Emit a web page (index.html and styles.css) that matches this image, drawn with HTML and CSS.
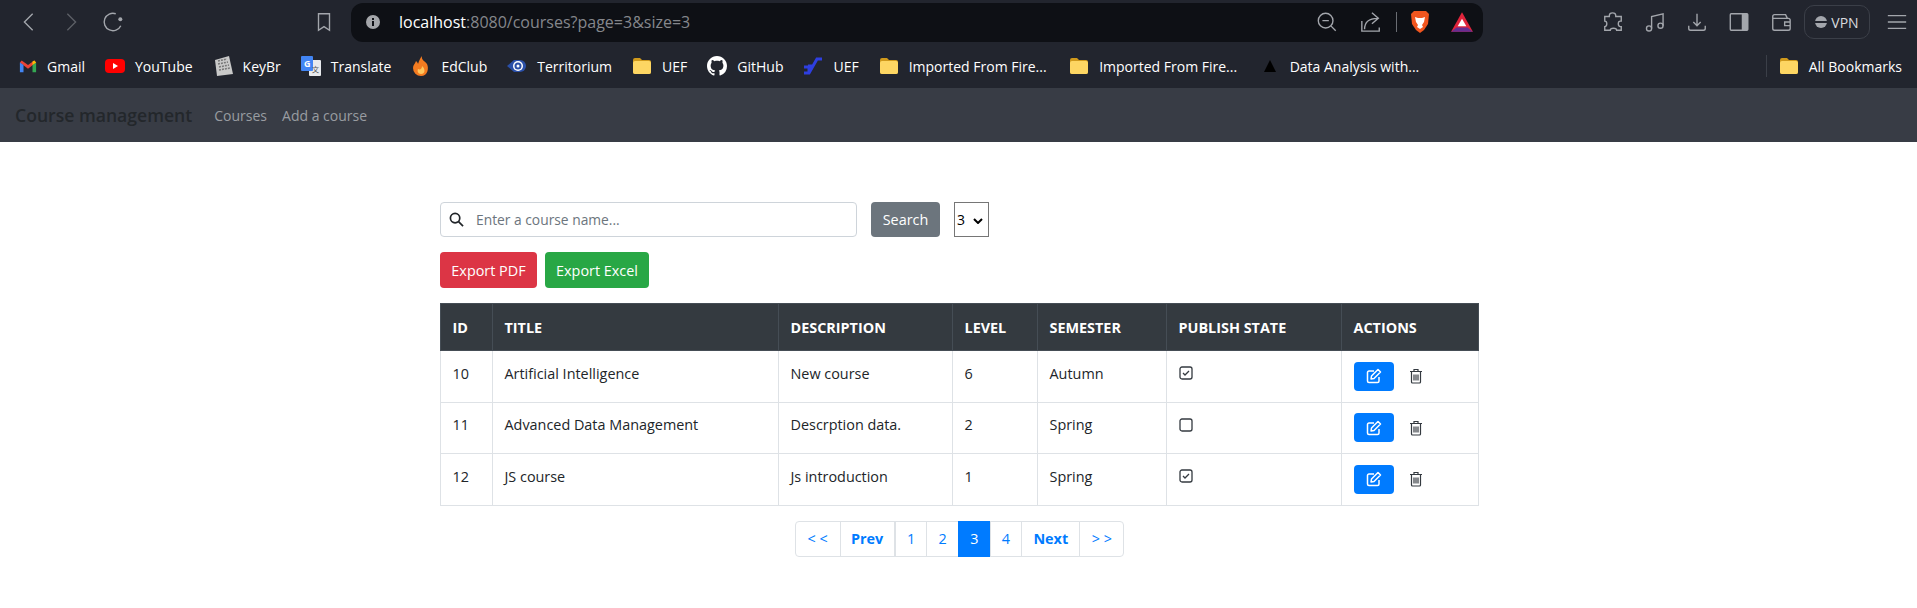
FILE: index.html
```html
<!DOCTYPE html>
<html lang="en">

<head>
  <meta charset="UTF-8">
  <title>Course management</title>
  <link rel="stylesheet" href="styles.css">
</head>

<body>
  <div class="toolbar">
    <div class="nav-icons">
      <svg class="tb-icon" viewBox="0 0 24 24"><path d="M16 3l-9 9 9 9" /></svg>
      <svg class="tb-icon dim" viewBox="0 0 24 24"><path d="M8 3l9 9-9 9" /></svg>
      <svg class="tb-icon" viewBox="0 0 24 24"><path d="M20.500 16A9.500 9.500 0 1 1 15 3" /><circle class="fill" cx="20" cy="9" r="2.200" /></svg>
    </div>
    <svg class="tb-icon bookmark-icon" viewBox="0 0 24 24"><path d="M6 3h12v18l-6-4-6 4z" /></svg>
    <div class="address">
      <svg class="info-icon" viewBox="0 0 16 16"><circle cx="8" cy="8" r="7" fill="#a4a6aa" /><rect x="7" y="7" width="2" height="5" fill="#0e1015" /><rect x="7" y="4" width="2" height="2" fill="#0e1015" /></svg>
      <span class="url"><span class="host">localhost</span>:8080/courses?page=3&amp;size=3</span>
      <svg class="tb-icon addr-icon" viewBox="0 0 24 24"><circle cx="10.500" cy="10.500" r="8" /><path d="M7 10.500h7M16.500 16.500l5 5" /></svg>
      <svg class="tb-icon addr-icon share-icon" viewBox="0 0 24 24"><path d="M2 11v11h19v-4M5 20c0-8 4-12 14-12M13 2l7 6-7 6" /></svg>
      <span class="addr-sep"></span>
      <svg class="brave-icon" viewBox="0 0 20 24"><path d="M4 1h12l3 3-1 10-4 6-4 3-4-3-4-6L1 4z" fill="#f1561f" /><path d="M5 7l3 1h4l3-1-1 5-2 3 1 2-3 2-3-2 1-2-2-3z" fill="#fff" /></svg>
      <svg class="bat-icon" viewBox="0 0 22 20"><path d="M11 1L21 19H1z" fill="#e0243b" /><path d="M1 19l5-4h10l5 4z" fill="#662d91" /><path d="M11 7l4 7H7z" fill="#fff" /></svg>
    </div>
    <div class="tools">
      <svg class="tb-icon tool" viewBox="0 0 24 24"><path d="M8 5c0-4 7-4 7 0v1h6v5h-1c-3 0-3 6 0 6h1v4h-5c0-3-7-3-7 0H3v-4c3 0 3-6 0-6V6h5z" /></svg>
      <svg class="tb-icon tool" viewBox="0 0 24 24"><circle cx="5.500" cy="19" r="2.800" /><circle cx="18" cy="16" r="2.800" /><path d="M8.300 19V6L20.800 3v13" /></svg>
      <svg class="tb-icon tool" viewBox="0 0 24 24"><path d="M12 3v13M8 12l4 4 4-4M3 16v3a2 2 0 0 0 2 2h14a2 2 0 0 0 2-2v-3" /></svg>
      <svg class="tb-icon tool" viewBox="0 0 24 24"><rect x="2.500" y="3" width="19" height="18" rx="1" /><rect class="fill" x="15" y="3" width="7" height="18" /></svg>
      <svg class="tb-icon tool" viewBox="0 0 24 24"><path d="M3 8V6a2 2 0 0 1 2-2h12l2 4M3 8v11a2 2 0 0 0 2 2h15a2 2 0 0 0 2-2V10a2 2 0 0 0-2-2zM22 12h-6v4h6" /></svg>
      <div class="vpn"><span class="vpn-dot"></span>VPN</div>
      <svg class="tb-icon menu-icon" viewBox="0 0 24 24"><path d="M2 5h20M2 12h20M2 19h20" /></svg>
    </div>
  </div>

  <div class="bookmarks">
    <a class="bm" href="#">
      <svg class="fav fav-gmail" viewBox="0 0 20 16"><path d="M1 4l9 7 9-7-2-2-7 5-7-5z" fill="#ea4335" /><path d="M1 4v11h4V7z" fill="#4285f4" /><path d="M19 4v11h-4V7z" fill="#34a853" /><path d="M15 7V3l2-1 2 2z" fill="#fbbc04" /></svg>
      Gmail
    </a>
    <a class="bm" href="#">
      <svg class="fav" viewBox="0 0 20 16"><rect y="1" width="20" height="14" rx="4" fill="#f00" /><path d="M8 5l5 3-5 3z" fill="#fff" /></svg>
      YouTube
    </a>
    <a class="bm" href="#">
      <svg class="fav" viewBox="0 0 20 20"><path d="M2 4l14-4 4 18-16 2z" fill="#c9c9c9" /><path d="M5 5l9-2M5 8l10-2M6 11l10-2M6 14l11-2" stroke="#777" stroke-width="1.500" stroke-dasharray="2 1" /></svg>
      KeyBr
    </a>
    <a class="bm" href="#">
      <svg class="fav" viewBox="0 0 20 20"><rect x="8" y="4" width="12" height="16" rx="1" fill="#e8eaed" /><rect width="12" height="15" rx="1" fill="#4285f4" /><text class="fav-g" x="3" y="11">G</text><text class="fav-t" x="11" y="16">文</text></svg>
      Translate
    </a>
    <a class="bm" href="#">
      <svg class="fav" viewBox="0 0 20 20"><path d="M10 20a8 8 0 0 1-8-8c0-3 2-4 3-7 1 1 2 2 2 3 1-3 2-6 4-8-1 4 3 5 5 8 2 4 1 12-6 12z" fill="#f47b20" /><path d="M10 18c-3 0-4-3-3-5 2 1 4 0 4-3 3 2 4 8-1 8z" fill="#ffc65c" /></svg>
      EdClub
    </a>
    <a class="bm" href="#">
      <svg class="fav" viewBox="0 0 20 16"><path d="M0 8l7-6h6a6 6 0 0 1 0 12H7z" fill="#2a4fa8" /><circle cx="11" cy="8" r="5" fill="#fff" /><circle cx="11" cy="8" r="3.500" fill="#2a4fa8" /><circle cx="11" cy="8" r="1.500" fill="#fff" /></svg>
      Territorium
    </a>
    <a class="bm" href="#"><svg class="fav" viewBox="0 0 20 18"><use href="#folder" /></svg>UEF</a>
    <a class="bm" href="#">
      <svg class="fav" viewBox="0 0 16 16"><path fill="#fff" d="M8 0C3.580 0 0 3.580 0 8c0 3.540 2.290 6.530 5.470 7.590.4.070.55-.17.55-.38 0-.19-.01-.82-.01-1.490-2.010.37-2.530-.49-2.690-.94-.09-.23-.48-.94-.82-1.130-.28-.15-.68-.52-.01-.53.63-.01 1.080.58 1.230.82.720 1.210 1.870.870 2.330.660.070-.520.280-.870.510-1.070-1.780-.2-3.640-.89-3.640-3.950 0-.870.310-1.590.820-2.150-.08-.2-.36-1.020.08-2.120 0 0 .67-.21 2.200.820.640-.18 1.320-.27 2-.27s1.360.09 2 .27c1.530-1.040 2.200-.82 2.200-.82.440 1.100.16 1.920.08 2.120.51.560.82 1.270.82 2.150 0 3.070-1.870 3.750-3.650 3.950.290.250.540.730.540 1.480 0 1.070-.01 1.930-.01 2.200 0 .21.150.46.550.38A8.010 8.010 0 0 0 16 8c0-4.420-3.580-8-8-8z" /></svg>
      GitHub
    </a>
    <a class="bm" href="#">
      <svg class="fav" viewBox="0 0 20 20"><path d="M19 3h-5l-4 7h-3l-2 0M1 17h5l4-7M1 11h5v6" fill="none" stroke="#2e3fe0" stroke-width="3" /></svg>
      UEF
    </a>
    <a class="bm bm-imported" href="#"><svg class="fav" viewBox="0 0 20 18"><use href="#folder" /></svg>Imported From Fire...</a>
    <a class="bm bm-imported" href="#"><svg class="fav" viewBox="0 0 20 18"><use href="#folder" /></svg>Imported From Fire...</a>
    <a class="bm" href="#">
      <svg class="fav" viewBox="0 0 20 20"><path d="M10 4l6 12H4z" fill="#000" /></svg>
      Data Analysis with...
    </a>
    <span class="bm-sep"></span>
    <a class="bm" href="#"><svg class="fav" viewBox="0 0 20 18"><use href="#folder" /></svg>All Bookmarks</a>
  </div>

  <svg class="defs" width="0" height="0">
    <symbol id="folder" viewBox="0 0 20 18">
      <path d="M1 3a2 2 0 0 1 2-2h5l2 2h7a2 2 0 0 1 2 2v10a2 2 0 0 1-2 2H3a2 2 0 0 1-2-2z" fill="#d09a1c" />
      <rect x="1" y="4" width="18" height="13" rx="2" fill="#fdd663" />
    </symbol>
  </svg>

  <nav class="navbar">
    <a class="brand" href="#">Course management</a>
    <a class="nav-link" href="#">Courses</a>
    <a class="nav-link" href="#">Add a course</a>
  </nav>

  <main class="container">
    <form class="search-row">
      <div class="search-box">
        <svg class="search-icon" viewBox="0 0 16 16"><circle cx="6.500" cy="6.500" r="5" /><path d="M10.200 10.200L15 15" /></svg>
        <input type="text" placeholder="Enter a course name...">
      </div>
      <button type="button" class="btn btn-search">Search</button>
      <select class="size-select">
        <option>3</option>
      </select>
    </form>

    <div class="export-row">
      <button type="button" class="btn btn-pdf">Export PDF</button>
      <button type="button" class="btn btn-excel">Export Excel</button>
    </div>

    <table class="courses">
      <colgroup>
        <col class="c-id"><col class="c-title"><col class="c-desc"><col class="c-level"><col class="c-sem"><col class="c-pub"><col>
      </colgroup>
      <thead>
        <tr>
          <th>ID</th>
          <th>TITLE</th>
          <th>DESCRIPTION</th>
          <th>LEVEL</th>
          <th>SEMESTER</th>
          <th>PUBLISH STATE</th>
          <th>ACTIONS</th>
        </tr>
      </thead>
      <tbody>
        <tr>
          <td>10</td>
          <td>Artificial Intelligence</td>
          <td>New course</td>
          <td>6</td>
          <td>Autumn</td>
          <td><svg class="check" viewBox="0 0 14 14"><rect x="1" y="1" width="12" height="12" rx="2" /><path d="M4 7l2 2 4-4" /></svg></td>
          <td class="actions">
            <a class="edit" href="#"><svg viewBox="0 0 16 16"><use href="#edit" /></svg></a>
            <a class="trash" href="#"><svg viewBox="0 0 14 16"><use href="#trash" /></svg></a>
          </td>
        </tr>
        <tr>
          <td>11</td>
          <td>Advanced Data Management</td>
          <td>Descrption data.</td>
          <td>2</td>
          <td>Spring</td>
          <td><svg class="check" viewBox="0 0 14 14"><rect x="1" y="1" width="12" height="12" rx="2" /></svg></td>
          <td class="actions">
            <a class="edit" href="#"><svg viewBox="0 0 16 16"><use href="#edit" /></svg></a>
            <a class="trash" href="#"><svg viewBox="0 0 14 16"><use href="#trash" /></svg></a>
          </td>
        </tr>
        <tr>
          <td>12</td>
          <td>JS course</td>
          <td>Js introduction</td>
          <td>1</td>
          <td>Spring</td>
          <td><svg class="check" viewBox="0 0 14 14"><rect x="1" y="1" width="12" height="12" rx="2" /><path d="M4 7l2 2 4-4" /></svg></td>
          <td class="actions">
            <a class="edit" href="#"><svg viewBox="0 0 16 16"><use href="#edit" /></svg></a>
            <a class="trash" href="#"><svg viewBox="0 0 14 16"><use href="#trash" /></svg></a>
          </td>
        </tr>
      </tbody>
    </table>

    <svg class="defs" width="0" height="0">
      <symbol id="edit" viewBox="0 0 16 16">
        <path d="M8 3H3a1.500 1.500 0 0 0-1.500 1.500v8.500A1.500 1.500 0 0 0 3 14.500h8.500a1.500 1.500 0 0 0 1.500-1.500V9" fill="none" stroke="#fff" stroke-width="1.500" />
        <path d="M12 1.500l2.500 2.500-6.500 6.500-3 .5.500-3z" fill="none" stroke="#fff" stroke-width="1.500" stroke-linejoin="round" />
      </symbol>
      <symbol id="trash" viewBox="0 0 14 16">
        <path d="M1 3.500h12M5 3V1.500h4V3M2.500 3.500v10.500a1 1 0 0 0 1 1h7a1 1 0 0 0 1-1V3.500M5 6.500v6M7 6.500v6M9 6.500v6" fill="none" stroke="#343a40" stroke-width="1.200" />
      </symbol>
    </svg>

    <div class="pagination">
      <a class="page p-first" href="#">&lt; &lt;</a>
      <a class="page p-prev bold" href="#">Prev</a>
      <a class="page p-num" href="#">1</a>
      <a class="page p-num" href="#">2</a>
      <a class="page p-num active" href="#">3</a>
      <a class="page p-num" href="#">4</a>
      <a class="page p-next bold" href="#">Next</a>
      <a class="page p-last" href="#">&gt; &gt;</a>
    </div>
  </main>
</body>

</html>
```

FILE: styles.css
```css
body {
  margin: 0;
  font-family: "Open Sans", Arial, sans-serif;
  font-size: 14.400px;
  color: #212529;
  background-color: #fff;
}

a {
  text-decoration: none;
}

.defs {
  position: absolute;
}

/* browser top bar */
.toolbar {
  height: 44px;
  background-color: #22252e;
  display: flex;
  align-items: center;
  box-sizing: border-box;
  padding: 0 0 0 18px;
}

.tb-icon {
  width: 22px;
  height: 22px;
  fill: none;
  stroke: #a3a6ac;
  stroke-width: 1.500;
}

.tb-icon .fill {
  fill: #a3a6ac;
  stroke: none;
}

.tb-icon.dim {
  stroke: #5c5f66;
}

.nav-icons {
  display: flex;
  gap: 20px;
  width: 295px;
}

.bookmark-icon {
  margin-right: 16px;
}

.address {
  width: 1132px;
  height: 39px;
  background-color: #0e1015;
  border-radius: 12px;
  display: flex;
  align-items: center;
  box-sizing: border-box;
  padding: 0 9px 0 14px;
  color: #85878c;
  font-size: 16px;
}

.info-icon {
  width: 16px;
  height: 16px;
  margin-right: 18px;
}

.host {
  color: #fff;
}

.url {
  flex: 1;
}

.addr-icon {
  margin-right: 22px;
}

.share-icon {
  margin-right: 14px;
}

.addr-sep {
  width: 1px;
  height: 20px;
  background-color: #6a6d73;
  margin-right: 13px;
}

.brave-icon {
  width: 20px;
  height: 24px;
  margin-right: 20px;
}

.bat-icon {
  width: 24px;
  height: 22px;
}

.tools {
  display: flex;
  align-items: center;
  margin-left: 119px;
}

.tool {
  margin-right: 20px;
}

.vpn {
  width: 66px;
  height: 34px;
  box-sizing: border-box;
  border: 1px solid #3b3f48;
  border-radius: 10px;
  display: flex;
  align-items: center;
  justify-content: center;
  gap: 4px;
  color: #d8dade;
  font-size: 14px;
  margin-left: -8px;
  margin-right: 16px;
}

.vpn-dot {
  width: 12px;
  height: 12px;
  border-radius: 50%;
  background: linear-gradient(#a3a6ac 0 40%, #22252e 40% 60%, #a3a6ac 60%);
}

/* bookmarks bar */
.bookmarks {
  height: 44px;
  background-color: #22252e;
  display: flex;
  align-items: center;
  box-sizing: border-box;
  padding: 0 15px 0 19px;
  gap: 20px;
}

.bm {
  display: flex;
  align-items: center;
  gap: 10px;
  color: #fff;
  font-size: 14px;
  white-space: nowrap;
}

.bm-imported {
  margin-right: 2.500px;
}

.fav {
  width: 20px;
  height: 20px;
  flex-shrink: 0;
}

.fav-gmail {
  width: 18px;
}

.fav-g {
  font-size: 9px;
  font-weight: bold;
  fill: #fff;
}

.fav-t {
  font-size: 7px;
  fill: #555;
  font-family: "Noto Sans CJK SC", sans-serif;
}

.bm-sep {
  width: 1px;
  height: 22px;
  background-color: #3b3f48;
  margin-left: auto;
  margin-right: -8px;
}

/* page navbar */
.navbar {
  height: 54px;
  background-color: #383c45;
  display: flex;
  align-items: center;
  box-sizing: border-box;
  padding: 0 15px;
}

.brand {
  color: #23272b;
  font-size: 17.600px;
  font-weight: 600;
  margin-right: 22px;
}

.nav-link {
  color: #999ca1;
  font-size: 14px;
  margin-right: 15px;
}

/* page content */
.container {
  width: 1039px;
  margin: 60px 0 0 440px;
}

.search-row {
  display: flex;
  align-items: stretch;
  height: 35px;
}

.search-box {
  width: 417px;
  box-sizing: border-box;
  border: 1px solid #ced4da;
  border-radius: 4px;
  display: flex;
  align-items: center;
  padding-left: 8px;
  margin-right: 14px;
}

.search-icon {
  width: 15px;
  height: 15px;
  fill: none;
  stroke: #212529;
  stroke-width: 1.800;
  margin-right: 10px;
}

.search-box input {
  flex: 1;
  border: none;
  outline: none;
  font-family: inherit;
  font-size: 13.800px;
  color: #495057;
  min-width: 0;
}

.search-box input::placeholder {
  color: #6c757d;
}

.btn {
  border: none;
  border-radius: 4px;
  color: #fff;
  font-family: inherit;
  font-size: 14.400px;
  cursor: pointer;
  padding: 0;
}

.btn-search {
  width: 69px;
  background-color: #6c757d;
  margin-right: 14px;
}

.size-select {
  width: 35px;
  border: 1px solid #767676;
  border-radius: 0;
  appearance: none;
  background: #fff url("data:image/svg+xml,%3Csvg xmlns='http://www.w3.org/2000/svg' width='10' height='6'%3E%3Cpath d='M1 1l4 4 4-4' fill='none' stroke='%23000' stroke-width='2'/%3E%3C/svg%3E") no-repeat 18px 15px;
  font-family: inherit;
  font-size: 14px;
  padding: 0 0 0 2px;
}

.export-row {
  display: flex;
  gap: 8px;
  margin-top: 15px;
  height: 36px;
}

.btn-pdf {
  width: 97px;
  background-color: #dc3545;
}

.btn-excel {
  width: 104px;
  background-color: #28a745;
}

/* table */
.courses {
  width: 1039px;
  margin-top: 15px;
  border-collapse: collapse;
  table-layout: fixed;
}

.c-id { width: 52px; }
.c-title { width: 286px; }
.c-desc { width: 174px; }
.c-level { width: 85px; }
.c-sem { width: 129px; }
.c-pub { width: 175px; }

.courses th {
  background-color: #343a40;
  border: 1px solid #454d55;
  color: #fff;
  font-weight: 700;
  text-align: left;
  padding: 0 12px 0 11.500px;
  height: 46px;
}

.courses td {
  border: 1px solid #dee2e6;
  padding: 0 12px 6px 11.500px;
  height: 51.500px;
  vertical-align: middle;
  box-sizing: border-box;
}

.check {
  width: 14px;
  height: 14px;
  fill: none;
  stroke: #343a40;
  stroke-width: 1.300;
  display: block;
}

.courses td.actions {
  padding-bottom: 0;
  white-space: nowrap;
}

.edit {
  display: inline-flex;
  align-items: center;
  justify-content: center;
  width: 40px;
  height: 29px;
  background-color: #007bff;
  border-radius: 4px;
  vertical-align: middle;
}

.edit svg {
  width: 16px;
  height: 16px;
}

.trash {
  display: inline-flex;
  margin-left: 12px;
  vertical-align: middle;
}

.trash svg {
  width: 14px;
  height: 16px;
}

/* pagination */
.pagination {
  display: flex;
  justify-content: center;
  margin-top: 15px;
}

.page {
  height: 36px;
  box-sizing: border-box;
  border: 1px solid #dee2e6;
  margin-left: -1px;
  display: flex;
  align-items: center;
  justify-content: center;
  color: #007bff;
  background-color: #fff;
}

.bold {
  font-weight: 700;
}

.p-first { width: 46px; border-radius: 4px 0 0 4px; margin-left: 0; }
.p-prev { width: 56px; border-right-width: 2px; }
.p-num { width: 32.670px; }
.p-next { width: 59px; }
.p-last { width: 45px; border-radius: 0 4px 4px 0; }

.active {
  background-color: #007bff;
  border-color: #007bff;
  color: #fff;
}
```
